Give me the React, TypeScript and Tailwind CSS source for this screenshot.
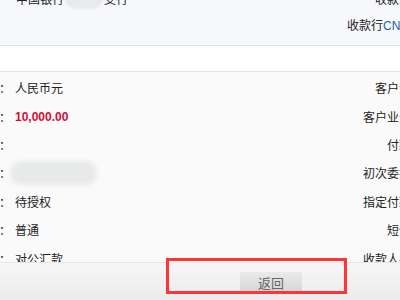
const font = { fontFamily: '"Noto Sans CJK SC", "Liberation Sans", sans-serif' };

type Row = {
  label: string;
  value?: React.ReactNode;
  right: string;
};

const rows: Row[] = [
  { label: "币种：", value: "人民币元", right: "客户流水号：" },
  {
    label: "金额：",
    value: <span className="font-bold text-[#d0103a] font-['Liberation_Sans']">10,000.00</span>,
    right: "客户业务编号：",
  },
  { label: "用途：", right: "付款用途：" },
  {
    label: "附言：",
    value: <div className="w-[87px] h-[24px] rounded-full bg-[#e8e9e9] blur-[2px] -ml-[5px]" />,
    right: "初次委托日期：",
  },
  { label: "状态：", value: "待授权", right: "指定付款日期：" },
  { label: "汇款方式：", value: "普通", right: "短信通知：" },
  { label: "业务类型：", value: "对公汇款", right: "收款人手机号：" },
];

export default function App() {
  return (
    <div className="relative w-[400px] h-[300px] overflow-hidden bg-white text-[12px] text-[#222]" style={font}>
      <div className="w-[460px]">
        {/* top receiver block */}
        <div className="h-[46px] bg-[#f7f8fc] border-b border-[#dbe3f2] overflow-hidden">
          <div className="-mt-[15px] flex h-[27px] items-center">
            <div className="w-[16px]" />
            <div className="w-[347px] flex items-center">
              <span>中国银行</span>
              <div className="w-[40px] h-[26px] mt-[-6px] rounded-full bg-[#e9eaee] blur-[1px]" />
              <span>支行</span>
            </div>
            <div className="w-[84px] text-right whitespace-nowrap">收款人账号：</div>
          </div>
          <div className="flex h-[27px] items-center">
            <div className="w-[347px]" />
            <div className="whitespace-nowrap">
              收款行<span className="text-[#1d5fae] font-['Liberation_Sans']">CNAPS号：</span>
            </div>
          </div>
        </div>

        <div className="h-[26px] bg-white border-b border-[#e4e4e4]" />

        <div className="h-[190px] pt-[2px] bg-[#fafafa] overflow-hidden">
          {rows.map((r, i) => (
            <div key={i} className="flex h-[28.4px] items-center">
              <div className="w-[11px] shrink-0 flex justify-end overflow-hidden whitespace-nowrap">
                <span>{r.label}</span>
              </div>
              <div className="w-[352px] shrink-0 pl-[4px] flex items-center">{r.value}</div>
              <div className="w-[84px] shrink-0 text-right whitespace-nowrap">{r.right}</div>
            </div>
          ))}
        </div>
      </div>

      <div className="h-[38px] w-[400px] border-t border-[#e6e6e6] bg-gradient-to-b from-[#f6f6f6] to-[#ececec] flex items-start">
        <div className="w-[240px]" />
        <button className="mt-[9px] w-[62px] h-[21px] bg-gradient-to-b from-[#eaeaea] to-[#d6d6d6] text-[#666] text-[13px] leading-[21px]">
          返回
        </button>
      </div>

      <div className="absolute left-[166px] top-[258px] w-[181px] h-[36px] border-[3px] border-[#ff3535]" />
    </div>
  );
}
